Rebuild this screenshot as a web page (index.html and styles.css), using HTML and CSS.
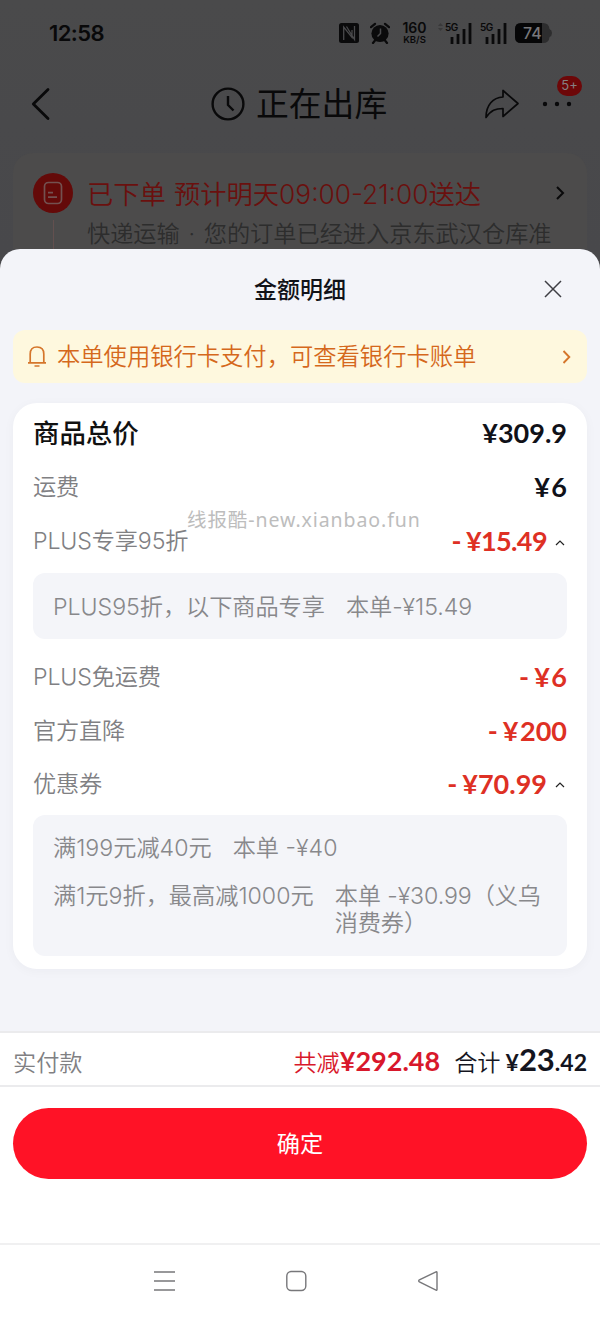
FILE: index.html
```html
<!DOCTYPE html>
<html lang="zh-CN">
<head>
<meta charset="utf-8">
<title>金额明细</title>
<link rel="stylesheet" href="styles.css">
</head>
<body>
<div class="screen">
  <header class="status">
    <span class="time">12:58</span>
    <div class="status-icons">
      <svg class="nfc" width="20" height="20" viewBox="0 0 20 20"><rect width="20" height="20" rx="2.5" fill="#0a0a0b"/><path d="M4.700 17V4L13 14.500V7M7.500 3.500 15.500 16.500V3" fill="none" stroke="#4a4a4c" stroke-width="1.300"/></svg>
      <svg class="alarm" width="20" height="22" viewBox="0 0 20 22"><circle cx="10" cy="11.5" r="8.6" fill="#0a0a0b"/><path d="M1 5.2 5 1.8M19 5.2 15 1.8M5 18.5 3 21M15 18.5 17 21" stroke="#0a0a0b" stroke-width="2.2" stroke-linecap="round"/><path d="M10.5 6.5V11.5L7.5 14.5" fill="none" stroke="#4a4a4c" stroke-width="1.5"/></svg>
      <div class="speed"><b>160</b><i>KB/S</i></div>
      <svg class="updown" width="5" height="8" viewBox="0 0 5 8"><path d="M0 3 2.5 0 5 3zM0 5 2.5 8 5 5z" fill="#39393a"/></svg>
      <div class="signal"><span>5G</span><svg width="22" height="21" viewBox="0 0 22 21"><path d="M2 14V21M8 11V21M14 6V21M20 0V21" stroke="#0a0a0b" stroke-width="2.800"/></svg></div>
      <div class="signal second"><span>5G</span><svg width="22" height="21" viewBox="0 0 22 21"><path d="M2 14V21M8 11V21M14 6V21M20 0V21" stroke="#0a0a0b" stroke-width="2.800"/></svg></div>
      <div class="battery"><svg width="37" height="20" viewBox="0 0 37 20"><path d="M6 0H28Q34 0 34.500 6Q37 7 37 10Q37 13 34.500 14Q34 20 28 20H6Q0 20 0 14V6Q0 0 6 0Z" fill="#2d2d2e"/><path d="M6 0H27V20H6Q0 20 0 14V6Q0 0 6 0Z" fill="#060607"/></svg><span>74</span></div>
    </div>
  </header>

  <nav class="navbar">
    <svg class="back" width="20" height="34" viewBox="0 0 20 34"><path d="M17 2.500 2.300 17 17 31.500" fill="none" stroke="#09090a" stroke-width="2.800" stroke-linecap="round" stroke-linejoin="round"/></svg>
    <div class="nav-title">
      <svg width="34" height="34" viewBox="0 0 34 34"><g fill="none" stroke="#09090a" stroke-width="2.400"><circle cx="17" cy="17" r="15.400"/><path d="M17 9V18L22.500 23.500" stroke-linejoin="round"/></g></svg>
      <h1>正在出库</h1>
    </div>
    <svg class="share" width="36" height="32" viewBox="0 0 36 32"><path d="M19 2.500V9C9 9.500 2 17 2 29.500C7 22 11.500 20.500 19 20.500V28.500L34 15.500Z" fill="none" stroke="#09090a" stroke-width="1.700" stroke-linejoin="round"/></svg>
    <div class="more"><svg width="30" height="6" viewBox="0 0 30 6"><g fill="#09090a"><circle cx="3" cy="3" r="2.200"/><circle cx="15" cy="3" r="2.200"/><circle cx="27" cy="3" r="2.200"/></g></svg><span class="badge">5+</span></div>
  </nav>

  <section class="delivery">
    <div class="step">
      <svg width="40" height="40" viewBox="0 0 40 40"><circle cx="20" cy="20" r="20" fill="#640a09"/><rect x="11.500" y="9.500" width="17" height="21" rx="4" fill="none" stroke="#735150" stroke-width="1.700"/><path d="M15 19.700H20M15 24.200H24" stroke="#735150" stroke-width="1.700"/></svg>
      <span class="line"></span>
    </div>
    <div class="delivery-text">
      <h2><span class="placed">已下单</span>预计明天<span class="hours">09:00-21:00</span>送达</h2>
      <p>快递运输<span class="dot">·</span>您的订单已经进入京东武汉仓库准</p>
    </div>
    <svg class="go" width="10" height="16" viewBox="0 0 10 16"><path d="M2 2 8 8 2 14" fill="none" stroke="#09090a" stroke-width="2"/></svg>
  </section>

  <main class="sheet">
    <div class="sheet-head">
      <h2>金额明细</h2>
      <svg width="18" height="18" viewBox="0 0 18 18"><path d="M1 1 17 17M17 1 1 17" stroke="#3e3e44" stroke-width="1.500"/></svg>
    </div>
    <div class="notice">
      <svg class="bell" width="18" height="21" viewBox="0 0 18 21"><g fill="none" stroke="#d5762b" stroke-width="1.700"><path d="M0 16.800H18M2.200 16.800V8Q2.200 1 9 1T15.800 8V16.800"/><path d="M6.500 20H11.500"/></g></svg>
      <span>本单使用银行卡支付，可查看银行卡账单</span>
      <svg class="notice-go" width="9" height="14" viewBox="0 0 9 14"><path d="M1.500 1 7.300 7 1.500 13" fill="none" stroke="#d5762b" stroke-width="1.900"/></svg>
    </div>

    <div class="card">
      <div class="row total"><span class="label">商品总价</span><span class="price">¥309.9</span></div>
      <div class="row"><span class="label">运费</span><span class="price"><s>¥</s>6</span></div>
      <div class="row"><span class="label">PLUS专享95折</span><span class="price off tight"><i>-</i>¥15.49</span><svg class="caret" width="10" height="6" viewBox="0 0 10 6"><path d="M1 5 5 1 9 5" fill="none" stroke="#222" stroke-width="1.200"/></svg></div>
      <div class="detail single"><span>PLUS95折，以下商品专享</span><span>本单-¥15.49</span></div>
      <div class="row"><span class="label">PLUS免运费</span><span class="price off"><i>-</i><s>¥</s>6</span></div>
      <div class="row short"><span class="label">官方直降</span><span class="price off"><i>-</i><s>¥</s>200</span></div>
      <div class="row short"><span class="label">优惠券</span><span class="price off"><i>-</i>¥70.99</span><svg class="caret" width="10" height="6" viewBox="0 0 10 6"><path d="M1 5 5 1 9 5" fill="none" stroke="#222" stroke-width="1.200"/></svg></div>
      <div class="detail coupons">
        <div class="coupon"><span>满199元减40元</span><span>本单 -¥40</span></div>
        <div class="coupon"><span>满1元9折，最高减1000元</span><span class="amount">本单 -¥30.99（义乌<br>消费券）</span></div>
      </div>
      <div class="watermark">线报酷-new.xianbao.fun</div>
    </div>

    <div class="summary">
      <span class="pay">实付款</span>
      <span class="saved">共减<b>¥292.48</b></span>
      <span class="sum">合计<b>¥<em>23</em>.42</b></span>
    </div>
    <div class="action"><button class="confirm">确定</button></div>
  </main>

  <footer class="system">
    <svg width="22" height="22" viewBox="0 0 22 22"><path d="M1 2H22M1 11H22M1 20H22" stroke="#77777a" stroke-width="1.400"/></svg>
    <svg width="22" height="22" viewBox="0 0 22 22"><rect x="1.800" y="1.500" width="19" height="19" rx="4.500" fill="none" stroke="#77777a" stroke-width="1.400"/></svg>
    <svg width="22" height="22" viewBox="0 0 22 22"><path d="M19 1.800 2.400 9.800Q1 11 2.400 12L19 20.200Q20 20.500 20 19.500V2.500Q20 1.500 19 1.800Z" fill="none" stroke="#77777a" stroke-width="1.400"/></svg>
  </footer>
</div>
</body>
</html>
```
FILE: styles.css
```css
* { box-sizing: border-box; }
body, h1, h2, p { margin: 0; }
i, em { font-style: normal; }
svg { display: block; flex: none; }

body {
  background: #4a4a4c;
  font-family: Inter, "Noto Sans CJK SC", sans-serif;
  font-weight: 350;
  font-size: 23.2px;
}
.screen {
  width: 600px;
  height: 1318px;
  display: flex;
  flex-direction: column;
  overflow: hidden;
  background: linear-gradient(#4a4a4b, #48484b 250px);
}

/* Status bar */
.status {
  height: 66px;
  padding: 0 48px 0 49px;
  display: flex;
  align-items: center;
  justify-content: space-between;
  color: #09090a;
}
.time { font-size: 22px; line-height: 26px; font-weight: 600; letter-spacing: -0.6px; }
.status-icons { display: flex; align-items: center; }
.alarm { margin-left: 11px; }
.speed {
  margin-left: 11px;
  width: 27px;
  display: flex;
  flex-direction: column;
  align-items: center;
}
.speed b { font-size: 14px; line-height: 12px; font-weight: 600; }
.speed i { font-size: 9.5px; line-height: 11px; font-weight: 600; }
.updown { margin: -12px 2px 0 10px; }
.signal { position: relative; padding-left: 5px; }
.signal span {
  position: absolute;
  left: 0;
  top: -1px;
  font-size: 10px;
  line-height: 11px;
  font-weight: 600;
  letter-spacing: -0.5px;
}
.second { margin-left: 8px; }
.battery { position: relative; margin-left: 8px; }
.battery span {
  position: absolute;
  left: 8px;
  top: 0;
  font-size: 16px;
  line-height: 21px;
  font-weight: 500;
  color: #77777a;
}

/* Navigation bar */
.navbar {
  height: 87px;
  padding: 0 28px 12px 31px;
  display: flex;
  align-items: center;
}
.nav-title { display: flex; align-items: center; gap: 11px; margin-left: 160px; }
.nav-title h1 { font-size: 32.8px; line-height: 40px; font-weight: 400; color: #09090a; }
.share { margin-left: auto; }
.more { position: relative; margin-left: 22px; }
.badge {
  position: absolute;
  left: 15px;
  top: -25px;
  width: 25px;
  height: 20px;
  border-radius: 10px;
  background: #6d0708;
  color: #858082;
  font-size: 13px;
  line-height: 19px;
  font-weight: 400;
  text-align: center;
}

/* Delivery card, partly covered by the sheet */
.delivery {
  height: 96px;
  margin: 0 13px;
  padding: 20px 22px 0 20px;
  border-radius: 20px 20px 0 0;
  background: #4c4b4b;
  display: flex;
  overflow: hidden;
}
.step { width: 40px; display: flex; flex-direction: column; align-items: center; }
.line { width: 1px; height: 40px; margin-top: 7px; background: #63504f; }
.delivery-text { margin: 2px 0 0 14px; flex: 1; white-space: nowrap; }
.delivery-text h2 { font-size: 26.3px; line-height: 40px; font-weight: 350; color: #6a100e; }
.placed { margin-right: 8px; }
.delivery-text p { line-height: 38px; color: #2d2d2d; }
.dot { display: inline-block; width: 24px; text-align: center; }
.go { margin-top: 12px; }

/* Amount sheet */
.sheet {
  height: 994px;
  border-radius: 20px 20px 0 0;
  background: #f3f4f9;
  overflow: hidden;
  display: flex;
  flex-direction: column;
}
.sheet-head {
  height: 81px;
  padding: 0 38px 0 254px;
  display: flex;
  align-items: center;
  justify-content: space-between;
}
.sheet-head h2 { font-size: 23px; line-height: 30px; font-weight: 500; color: #111218; }
.sheet-head svg { margin-top: -2px; }
.notice {
  height: 53px;
  margin: 0 13px;
  padding: 0 16px 0 15px;
  border-radius: 12px;
  background: #fef8de;
  color: #d5681c;
  font-size: 23.3px;
  display: flex;
  align-items: center;
}
.notice span { margin-left: 11px; line-height: 30px; }
.notice-go { margin-left: auto; }

.card {
  position: relative;
  height: 566px;
  margin: 20px 13px 0;
  padding: 3px 20px 13px;
  border-radius: 24px;
  background: #fff;
  box-shadow: 0 2px 12px rgba(30, 30, 60, .035);
}
.row { height: 54px; display: flex; align-items: center; }
.short { height: 53px; }
.label { color: #808083; line-height: 30px; letter-spacing: -0.15px; }
.total .label { color: #111; font-size: 26.4px; font-weight: 500; letter-spacing: 0; }
.price {
  margin-left: auto;
  font-family: Lato, "Noto Sans CJK SC", sans-serif;
  font-size: 27px;
  line-height: 30px;
  font-weight: 700;
  color: #101118;
}
.price s { text-decoration: none; letter-spacing: 1.5px; }
.off { color: #de3024; }
.off i { margin-right: 5px; }
.tight { letter-spacing: -0.6px; }
.caret { margin: 3px 2px 0 8px; }
.detail { border-radius: 12px; background: #f4f5f9; color: #88888b; }
.single {
  height: 66px;
  margin: 5px 0 11px;
  padding: 0 20px 2px;
  display: flex;
  align-items: center;
  gap: 21px;
  letter-spacing: -0.05px;
}
.coupons { height: 141px; margin-top: 5px; padding: 20px 20px 0; }
.coupon { display: flex; gap: 21px; line-height: 27px; white-space: nowrap; }
.coupon + .coupon { margin-top: 21px; }
.amount { letter-spacing: -0.1px; }
.watermark {
  position: absolute;
  left: 174px;
  top: 103px;
  font-family: "Noto Sans", "Noto Sans CJK SC", sans-serif;
  font-size: 19.5px;
  line-height: 28px;
  font-weight: 400;
  letter-spacing: 0.92px;
  color: #bdbdbd;
  white-space: nowrap;
}

/* Totals and action */
.summary {
  height: 56px;
  margin-top: 62px;
  padding: 0 13px;
  border-top: 2px solid #ebebed;
  border-bottom: 2px solid #ebebed;
  background: #fff;
  display: flex;
  align-items: baseline;
  line-height: 61px;
  white-space: nowrap;
}
.summary b { font-family: Lato, sans-serif; font-weight: 700; font-size: 27px; line-height: 1; }
.pay { color: #808083; }
.saved { margin-left: auto; color: #d8182b; }
.sum { margin-left: 14px; color: #14151e; }
.summary .sum b { font-size: 23px; margin-left: 5px; }
.sum em { font-size: 31px; }
.action { flex: 1; padding: 21px 13px 0; background: #fff; }
.confirm {
  display: block;
  width: 574px;
  height: 71px;
  padding: 0 0 3px;
  border: 0;
  border-radius: 36px;
  background: #ff1226;
  color: #fff;
  font: inherit;
  font-weight: 400;
}

/* System navigation */
.system {
  height: 75px;
  border-top: 2px solid #f0f0f1;
  background: #fff;
  padding: 0 161px 1px 153px;
  display: flex;
  align-items: center;
  justify-content: space-between;
}
```
